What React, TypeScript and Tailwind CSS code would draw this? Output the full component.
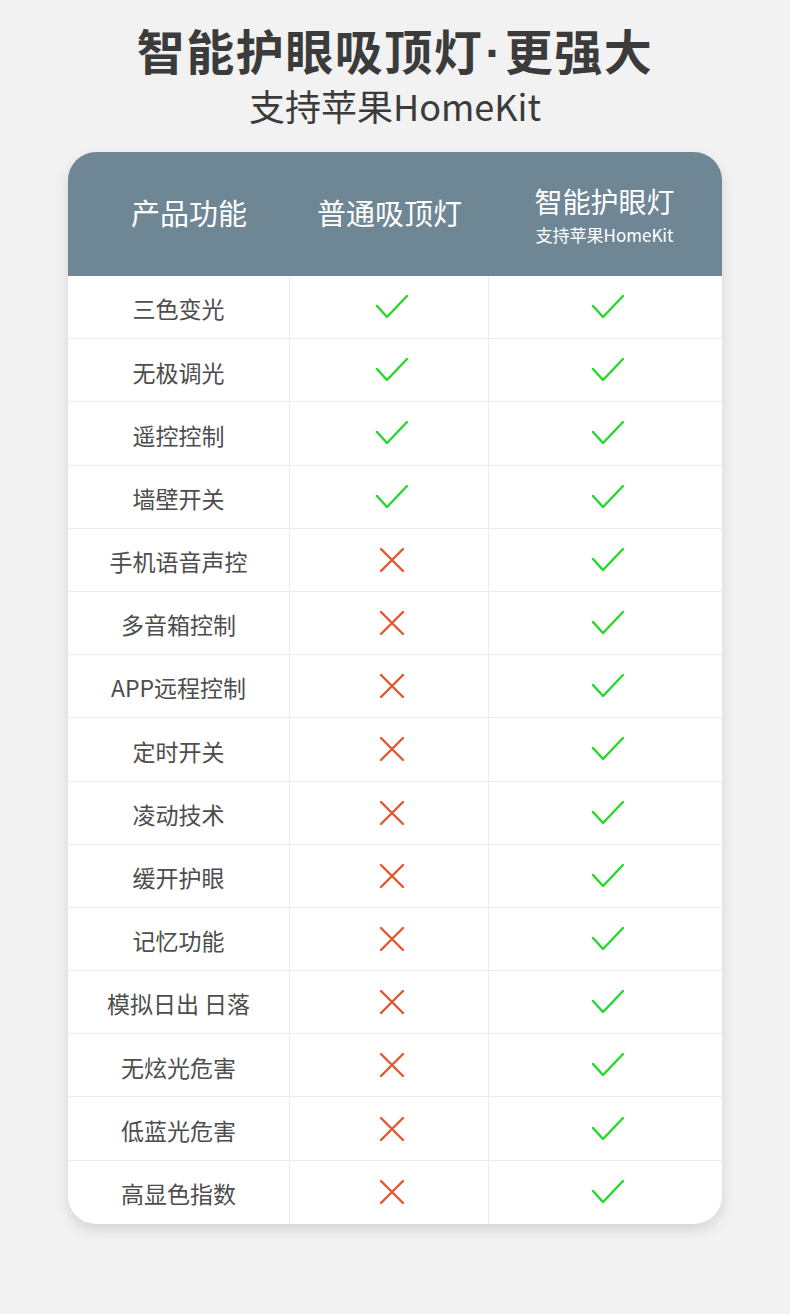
import React from "react";

const rows: [string, boolean][] = [
  ["三色变光", true],
  ["无极调光", true],
  ["遥控控制", true],
  ["墙壁开关", true],
  ["手机语音声控", false],
  ["多音箱控制", false],
  ["APP远程控制", false],
  ["定时开关", false],
  ["凌动技术", false],
  ["缓开护眼", false],
  ["记忆功能", false],
  ["模拟日出 日落", false],
  ["无炫光危害", false],
  ["低蓝光危害", false],
  ["高显色指数", false],
];

function Check() {
  return (
    <svg width="34" height="26" viewBox="0 0 34 26" fill="none">
      <path d="M2 12 L12 23 L32 2" stroke="#25d92a" strokeWidth="2.4" strokeLinecap="round" strokeLinejoin="round" />
    </svg>
  );
}

function Cross() {
  return (
    <svg width="26" height="26" viewBox="0 0 26 26" fill="none">
      <path d="M2 2 L24 24 M24 2 L2 24" stroke="#e2562f" strokeWidth="2.4" strokeLinecap="round" />
    </svg>
  );
}

export default function App() {
  return (
    <div
      className="w-[790px] h-[1314px] bg-[#f2f2f2] flex flex-col items-center"
      style={{ fontFamily: '"Noto Sans CJK SC", "Noto Sans", sans-serif' }}
    >
      <div className="mt-[19px] text-[48px] leading-[60px] font-bold text-[#3b3b3b] tracking-[1.5px] whitespace-nowrap">
        智能护眼吸顶灯<span style={{ fontFamily: '"Liberation Sans", sans-serif' }} className="mx-[2px]">·</span>更强大
      </div>
      <div className="mt-[-2px] text-[36px] leading-[46px] text-[#3b3b3b] whitespace-nowrap">支持苹果HomeKit</div>

      <div className="mt-[24px] w-[654px] rounded-[28px] bg-white overflow-hidden shadow-[0_6px_14px_rgba(0,0,0,0.12)]">
        <div className="h-[124px] bg-[#6f8795] flex text-white">
          <div className="w-[222px] flex items-center justify-center pb-[2px] text-[29px] pl-[20px]">产品功能</div>
          <div className="w-[199px] flex items-center justify-center pb-[2px] text-[29px]">普通吸顶灯</div>
          <div className="flex-1 flex flex-col items-center justify-center pt-[2px] pr-[2px]">
            <div className="text-[28px] leading-[30px]">智能护眼灯</div>
            <div className="mt-[10px] text-[17px] leading-[18px] whitespace-nowrap">支持苹果HomeKit</div>
          </div>
        </div>
        {rows.map(([label, ok], i) => (
          <div
            key={label}
            className={
              "h-[63.2px] flex " + (i < rows.length - 1 ? "border-b border-[#ececec]" : "")
            }
          >
            <div className="w-[222px] flex items-center justify-center text-[23px] text-[#4d4d4d] border-r border-[#ececec] pt-[3px] whitespace-nowrap">
              {label}
            </div>
            <div className="w-[199px] flex items-center justify-center border-r border-[#ececec] pl-[6px]">
              {ok ? <Check /> : <Cross />}
            </div>
            <div className="flex-1 flex items-center justify-center pl-[4px]">
              <Check />
            </div>
          </div>
        ))}
      </div>
    </div>
  );
}
